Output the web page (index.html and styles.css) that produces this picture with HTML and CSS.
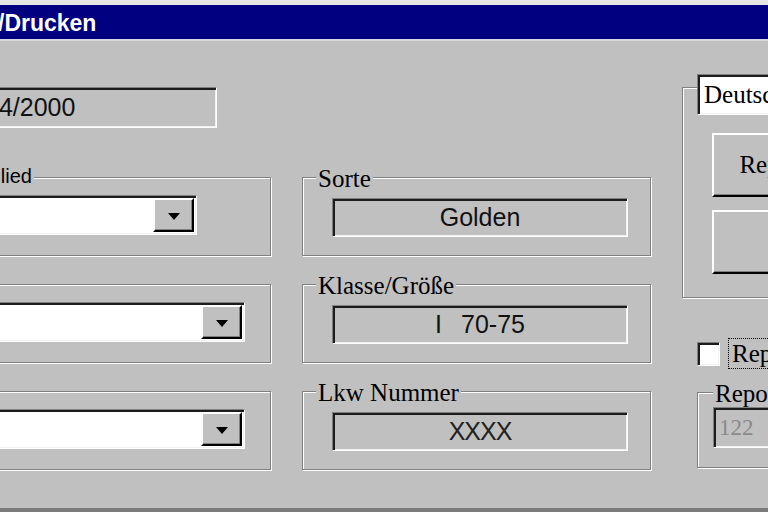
FILE: index.html
```html
<!DOCTYPE html>
<html lang="de">

<head>
	<title>Ansicht/Drucken</title>
	<meta charset="utf-8"/>
	<meta name="viewport" content="width=device-width, initial-scale=1"/>

	<link rel="stylesheet" href="styles.css">
</head>

<body>
	<div class="window">
		<div class="titlebar"><span class="caption">/Drucken</span></div>

		<div class="content">
			<div class="col col-left">
				<div class="field sunken date">04/2000</div>

				<div class="group first">
					<span class="label sans">Mitglied</span>
					<div class="combo sunken short">
						<div class="drop raised"><span class="arrow"></span></div>
					</div>
				</div>

				<div class="group">
					<div class="combo sunken">
						<div class="drop raised"><span class="arrow"></span></div>
					</div>
				</div>

				<div class="group">
					<div class="combo sunken">
						<div class="drop raised"><span class="arrow"></span></div>
					</div>
				</div>
			</div>

			<div class="col col-mid">
				<div class="group">
					<span class="label">Sorte</span>
					<div class="field sunken value">Golden</div>
				</div>

				<div class="group">
					<span class="label">Klasse/Größe</span>
					<div class="field sunken value"><span class="klasse">I</span>70-75</div>
				</div>

				<div class="group">
					<span class="label">Lkw Nummer</span>
					<div class="field sunken value xxxx">XXXX</div>
				</div>
			</div>

			<div class="col col-right">
				<div class="group panel">
					<div class="field sunken lang">Deutsch</div>
					<div class="btn raised">Report anzeigen</div>
					<div class="btn raised second">Drucken</div>
				</div>

				<div class="check-row">
					<div class="checkbox sunken"></div>
					<span class="check-label">Report speichern</span>
				</div>

				<div class="group repo">
					<span class="label repo-label">Reportnummer</span>
					<div class="field sunken num">122</div>
				</div>
			</div>
		</div>
	</div>
</body>
</html>
```

FILE: styles.css
```css
body {
	margin: 0;
	overflow: hidden;
	background-color: #c0c0c0;
	font-family: "Liberation Sans", Arial, sans-serif;
	color: #111;
}

.window {
	height: 503px;
	border-top: 5px solid #e6e6e6;
	border-bottom: 4px solid #7c7c7c;
	display: flex;
	flex-direction: column;
}

.titlebar {
	box-sizing: border-box;
	height: 36px;
	padding-top: 2px;
	background-color: #000080;
	border-bottom: 2px solid #d8d8d8;
	color: white;
	font-weight: bold;
	font-size: 23px;
	line-height: 33px;
	white-space: nowrap;
	overflow: hidden;
}

.caption {
	margin-left: -2px;
}

.content {
	flex: 1;
	display: grid;
	grid-template-columns: 324px 349px 340px;
	column-gap: 31px;
	margin-left: -53px;
}

.col {
	display: flex;
	flex-direction: column;
	align-items: flex-start;
}

.col-left { padding-top: 46px; }
.col-mid { padding-top: 136px; }
.col-right { padding-top: 46px; }

/* 3d borders */
.sunken {
	border: 1px solid;
	border-color: #808080 #ffffff #ffffff #808080;
	box-shadow: inset 2px 2px 0 #1c1c1c, inset -1px -1px 0 #f2f2f2;
}

.raised {
	border: 2px solid;
	border-color: #ffffff #000000 #000000 #ffffff;
	box-shadow: inset -1px -1px 0 #808080;
}

.group {
	position: relative;
	box-sizing: border-box;
	width: 100%;
	height: 79px;
	margin-top: 28px;
	border: 1px solid #808080;
	box-shadow: 1px 1px 0 #ffffff, inset 1px 1px 0 #ffffff;
}

.col-mid .group:first-child { margin-top: 0; }
.group.first { margin-top: 49px; }

.label {
	position: absolute;
	top: -12px;
	left: 13px;
	padding: 0 2px;
	background-color: #c0c0c0;
	font-family: "Liberation Serif", "Times New Roman", serif;
	font-size: 25px;
	line-height: 25px;
	color: #000;
	white-space: nowrap;
}

.label.sans {
	font-family: "Liberation Sans", Arial, sans-serif;
	font-size: 20px;
	line-height: 20px;
}

.field {
	box-sizing: border-box;
	background-color: #c0c0c0;
	font-size: 25px;
	white-space: nowrap;
	overflow: hidden;
}

.date {
	width: 238px;
	height: 41px;
	margin-left: 32px;
	padding-left: 5px;
	line-height: 39px;
}

/* combo boxes */
.combo {
	box-sizing: border-box;
	display: flex;
	justify-content: flex-end;
	width: 284px;
	height: 40px;
	margin: 17px 0 0 13px;
	padding: 2px;
	background-color: #ffffff;
}

.combo.short { width: 236px; }

.drop {
	box-sizing: border-box;
	width: 41px;
	height: 100%;
	background-color: #c0c0c0;
	display: flex;
	align-items: center;
	justify-content: center;
	padding-top: 3px;
}

.arrow {
	width: 0;
	height: 0;
	border-left: 6px solid transparent;
	border-right: 6px solid transparent;
	border-top: 7px solid #000;
}

/* read only values */
.value {
	width: 296px;
	height: 39px;
	margin: 20px 0 0 29px;
	text-align: center;
	line-height: 37px;
}

.klasse { margin-right: 19px; }

.xxxx {
	font-weight: 300;
	color: #222;
	letter-spacing: -1px;
}

/* right column */
.panel {
	height: 211px;
	margin-top: 0;
	display: flex;
	flex-direction: column;
	align-items: flex-start;
}

.lang {
	width: 200px;
	height: 41px;
	margin: -14px 0 0 14px;
	padding-left: 6px;
	background-color: #ffffff;
	font-family: "Liberation Serif", "Times New Roman", serif;
	line-height: 39px;
	color: #000;
}

.btn {
	box-sizing: border-box;
	width: 218px;
	height: 64px;
	margin: 18px 0 0 29px;
	background-color: #c0c0c0;
	font-family: "Liberation Serif", "Times New Roman", serif;
	font-size: 25px;
	line-height: 60px;
	text-align: center;
	color: #000;
	white-space: nowrap;
}

.btn.second { margin-top: 13px; }

.check-row {
	display: flex;
	align-items: center;
	height: 31px;
	margin: 40px 0 0 15px;
}

.checkbox {
	box-sizing: border-box;
	width: 23px;
	height: 24px;
	background-color: #ffffff;
}

.check-label {
	box-sizing: border-box;
	height: 31px;
	margin-left: 8px;
	padding: 0 3px;
	border: 1px dotted #000;
	font-family: "Liberation Serif", "Times New Roman", serif;
	font-size: 25px;
	line-height: 29px;
	color: #000;
	white-space: nowrap;
}

.group.repo {
	width: 200px;
	height: 76px;
	margin: 23px 0 0 15px;
}

.repo-label { left: 15px; }

.num {
	width: 180px;
	height: 41px;
	margin: 14px 0 0 15px;
	padding-left: 5px;
	font-family: "Liberation Serif", "Times New Roman", serif;
	font-size: 23px;
	line-height: 39px;
	color: #8a8a8a;
}
```
